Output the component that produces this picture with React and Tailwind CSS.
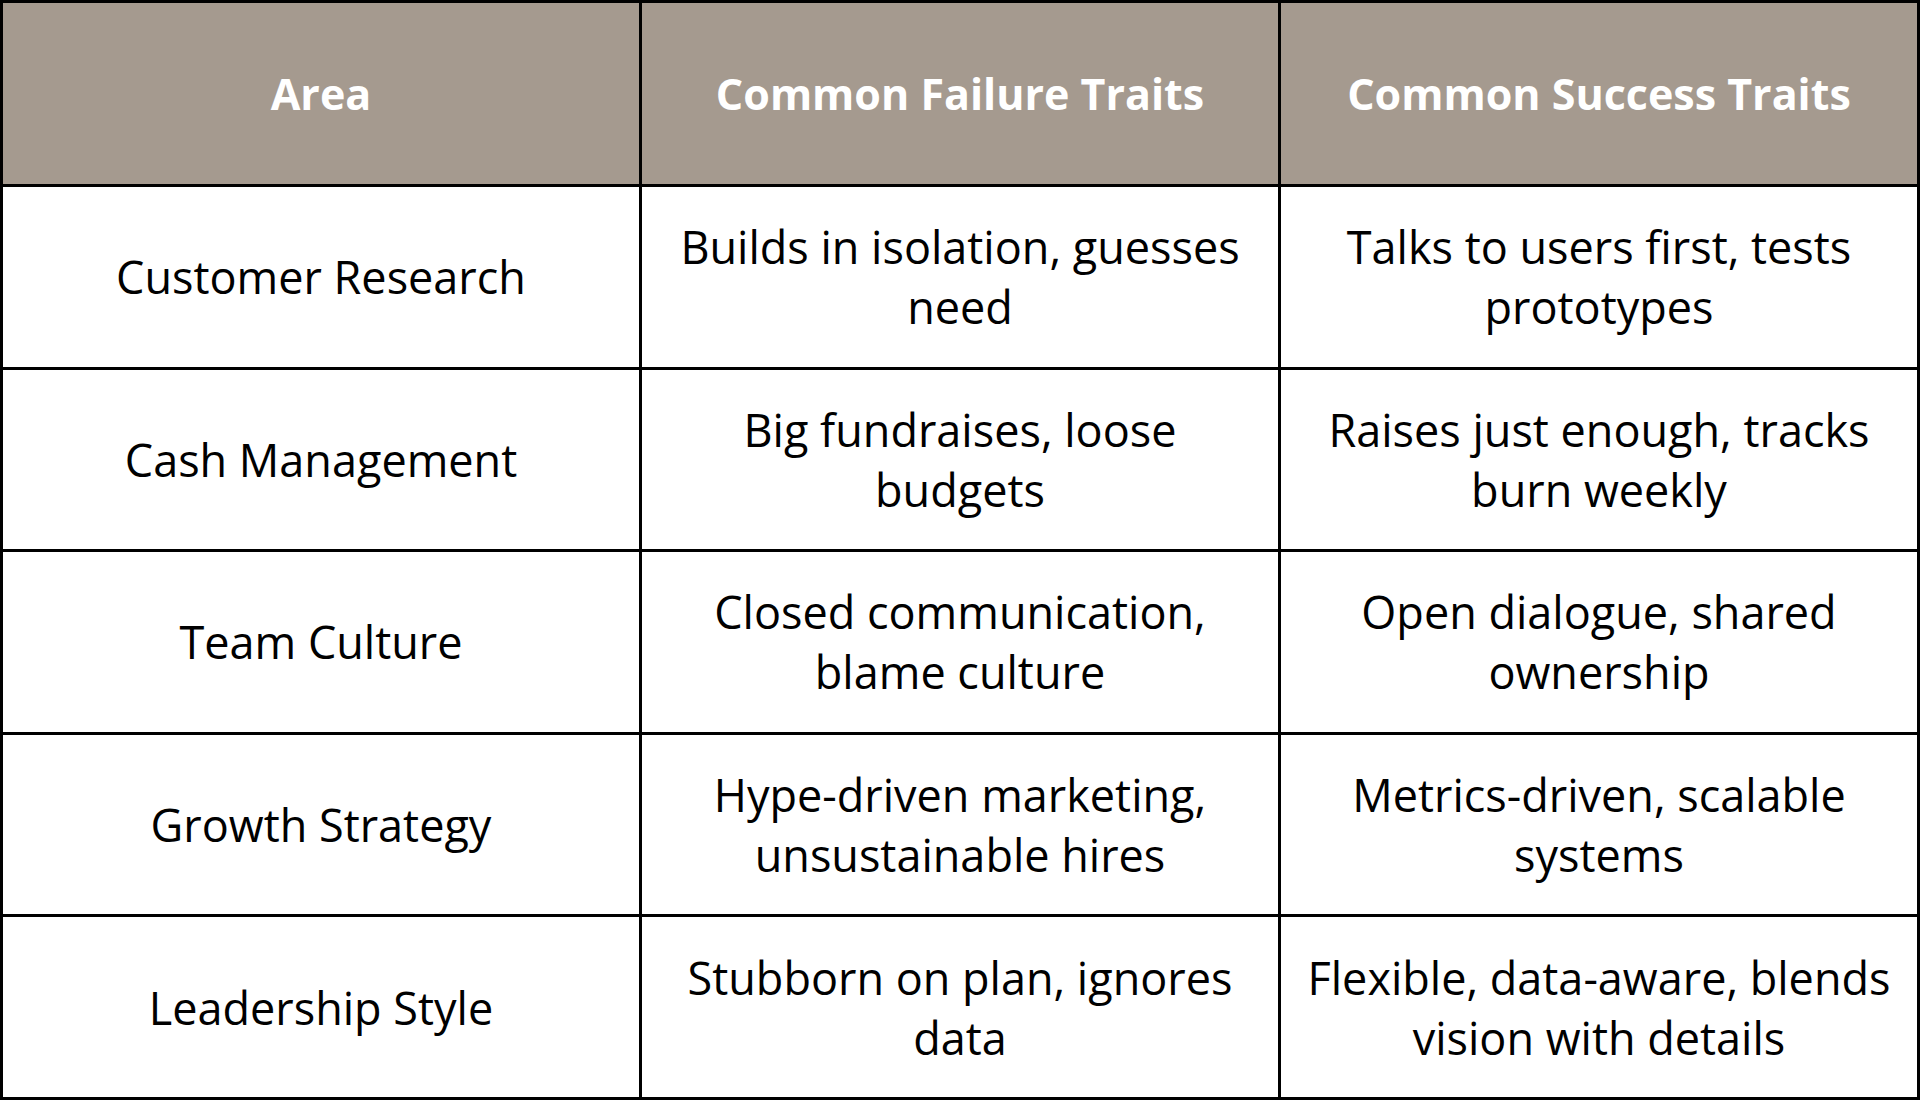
const headers = ['Area', 'Common Failure Traits', 'Common Success Traits'];

const rows = [
  [['Customer Research'], ['Builds in isolation, guesses', 'need'], ['Talks to users first, tests', 'prototypes']],
  [['Cash Management'], ['Big fundraises, loose', 'budgets'], ['Raises just enough, tracks', 'burn weekly']],
  [['Team Culture'], ['Closed communication,', 'blame culture'], ['Open dialogue, shared', 'ownership']],
  [['Growth Strategy'], ['Hype-driven marketing,', 'unsustainable hires'], ['Metrics-driven, scalable', 'systems']],
  [['Leadership Style'], ['Stubborn on plan, ignores', 'data'], ['Flexible, data-aware, blends', 'vision with details']],
];

const Cell = ({ lines }) => (
  <div className="bg-white flex flex-col items-center justify-center pt-[1px] text-center text-black text-[45px] leading-[60px] whitespace-nowrap font-['Open_Sans',sans-serif]">
    {lines.map((line, i) => (
      <span key={i}>{line}</span>
    ))}
  </div>
);

export default function App() {
  return (
    <div className="w-[1920px] h-[1100px] bg-black p-[3px] grid grid-cols-3 grid-rows-[181px_repeat(5,1fr)] gap-[3px]">
      {headers.map((h) => (
        <div
          key={h}
          className="bg-[#a59a8f] flex items-center justify-center pt-[2px] text-white font-bold text-[43px] font-['Open_Sans',sans-serif]"
        >
          {h}
        </div>
      ))}
      {rows.map((row, r) =>
        row.map((lines, c) => <Cell key={r + '-' + c} lines={lines} />)
      )}
    </div>
  );
}
